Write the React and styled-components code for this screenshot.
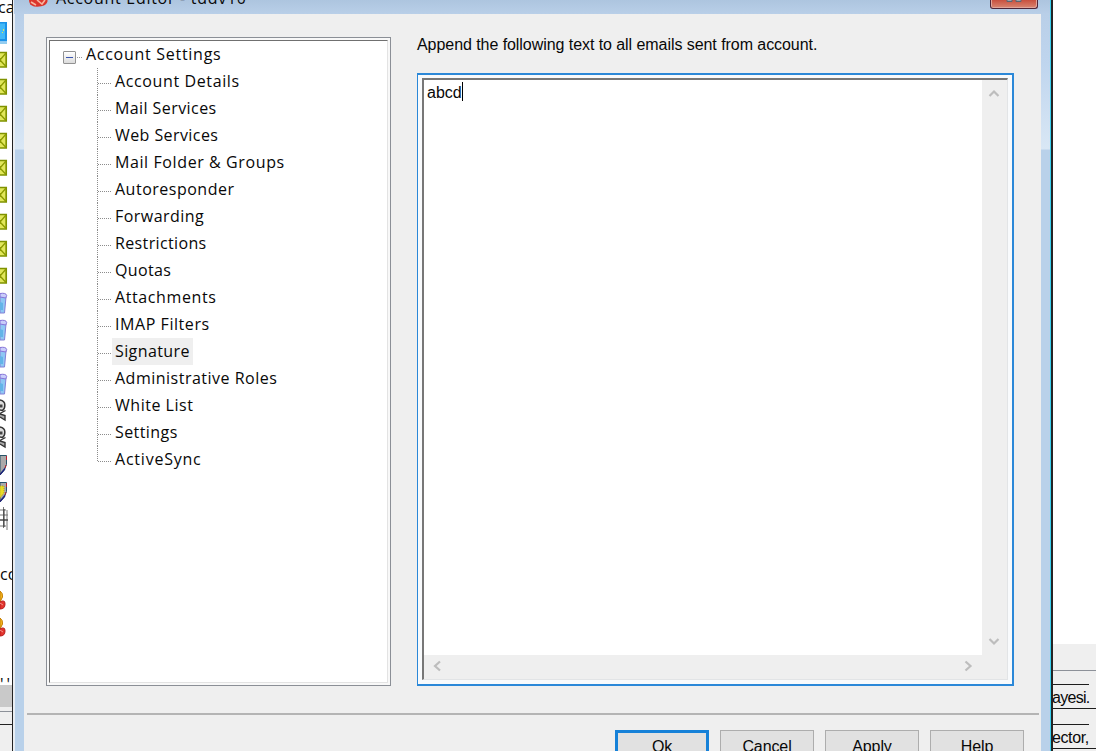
import React from 'react';
import styled, { createGlobalStyle, css } from 'styled-components';

const Global = createGlobalStyle`
  * { box-sizing: border-box; }
  html, body { margin: 0; height: 751px; overflow: hidden; background: #fff; }
`;

const Desktop = styled.div`
  display: flex;
  width: 1096px;
  height: 751px;
  overflow: hidden;
  color: #080808;
  font-family: 'Open Sans', 'Noto Sans', sans-serif;
  font-size: 16px;
`;

const LeftStrip = styled.div`
  display: flex;
  flex-direction: column;
  width: 12px;
  flex: none;
  overflow: hidden;
  background: #fff;
  white-space: nowrap;
`;

const StripLabel = styled.div`
  height: ${p => p.$h}px;
  line-height: ${p => p.$lh}px;
  flex: none;
  margin-left: ${p => p.$ml || 0}px;
  letter-spacing: ${p => p.$ls || 0}px;
`;

const IconCell = styled.div`
  height: 27px;
  flex: none;
  svg { display: block; }
`;

const StripBar = styled.div`
  height: ${p => p.$h}px;
  flex: none;
  background: ${p => p.$bg};
  border-bottom: ${p => p.$line || '0'};
`;

const Frame = styled.div`
  display: flex;
  flex-direction: column;
  width: 1041px;
  flex: none;
  border-left: 1px solid #222;
  border-right: 2px solid #252525;
  background: #e9eef3;
`;

const TitleBar = styled.div`
  display: flex;
  height: 14px;
  flex: none;
  margin-left: 1px;
  padding-left: 15px;
  border-right: 1px solid #38cfee;
  background: linear-gradient(#adc5df, #b9cfe8);
`;

const TitleText = styled.div`
  margin: -14px 0 0 7px;
  height: 24px;
  line-height: 24px;
  font-size: 16px;
  white-space: pre;
  letter-spacing: ${p => p.$ls}px;
`;

const CloseButton = styled.div`
  display: flex;
  justify-content: center;
  width: 48px;
  height: 9px;
  margin: 0 12px 0 auto;
  border: 1px solid #4f2638;
  border-top: 0;
  border-radius: 0 0 3px 3px;
  background: linear-gradient(#c8503e, #d98772);
  box-shadow: inset 1px 0 #e0a59a, inset -1px -1px #e0a59a;
`;

const Middle = styled.div`
  display: flex;
  flex: 1;
  min-height: 0;
  border-right: 1px solid #38cfee;
`;

const Side = styled.div`
  width: ${p => p.$w}px;
  flex: none;
  margin-left: ${p => p.$ml || 0}px;
  background: linear-gradient(#b9cfe8 0, #bfd5ee 50px, #d9e7f5 135px, #b9d1ea 136px);
`;

const Client = styled.div`
  flex: 1;
  display: flex;
  flex-direction: column;
  background: #efefef;
`;

const Panels = styled.div`
  display: flex;
  height: 699px;
  flex: none;
  padding: 23px 27px 0 22px;
`;

const TreeBox = styled.div`
  width: 345px;
  height: 649px;
  flex: none;
  border: 1px solid #8b8f96;
  padding: 2px;
  background: #f8f8f8;
`;

const TreeInner = styled.div`
  height: 643px;
  border-top: 1px solid #707070;
  border-left: 1px solid #707070;
  border-right: 1px solid #e3e3e3;
  border-bottom: 1px solid #e3e3e3;
  background: #fff;
`;

const TreeRoot = styled.div`
  display: flex;
  align-items: center;
  height: 27px;
  padding-left: 13px;
`;

const Expander = styled.div`
  display: grid;
  place-items: center;
  width: 13px;
  height: 13px;
  margin-top: 6px;
  border: 1px solid #929292;
  border-radius: 1px;
  background: linear-gradient(#fff, #dcdcdc);
  &::before { content: ''; width: 7px; height: 1px; background: #3c56b0; }
`;

const RootDots = styled.div`
  width: 5px;
  margin: 5px 4px 0 1px;
  border-top: 1px dotted #999;
`;

const Label = styled.span`
  letter-spacing: ${p => p.$ls || 0}px;
  white-space: nowrap;
`;

const RootLabel = styled(Label)`
  line-height: 22px;
  padding-bottom: 2px;
`;

const Branch = styled.div`
  display: flex;
  height: 27px;
  padding-left: 47px;
`;

const Joint = styled.div`
  width: 14px;
  height: ${p => (p.$last ? 15 : 27)}px;
  margin-right: 1px;
  border-left: 1px dotted #8c8c8c;
  &::before { content: ''; display: block; height: 15px; border-bottom: 1px dotted #8c8c8c; }
`;

const BranchText = styled.div`
  height: 27px;
  line-height: 27px;
  padding: 0 3px;
  ${p => p.$active && css`background: #efefef;`}
`;

const Editor = styled.div`
  display: flex;
  flex-direction: column;
  width: 597px;
  margin-left: 26px;
`;

const Hint = styled.div`
  height: 36px;
  line-height: 16px;
  font-family: 'Liberation Sans', Arial, sans-serif;
  font-size: 16px;
  letter-spacing: ${p => p.$ls}px;
  white-space: nowrap;
`;

const FocusBox = styled.div`
  height: 613px;
  padding: 3px 4px 4px 4px;
  border: 2px solid #2b88d8;
  border-left-width: 1px;
  background: #f8fafc;
`;

const TextArea = styled.div`
  display: grid;
  grid-template-columns: 1fr 25px;
  grid-template-rows: 1fr 24px;
  height: 602px;
  border: 1px solid #e2e4e6;
  border-top: 2px solid #777;
  border-left: 2px solid #777;
  background: #efefef;
`;

const Typed = styled.div`
  display: flex;
  align-items: flex-start;
  padding: 2px 0 0 3px;
  background: #fff;
  font-family: 'Liberation Sans', Arial, sans-serif;
  font-size: 16px;
  line-height: 21px;
`;

const Caret = styled.div`
  width: 1px;
  height: 19px;
  background: #000;
`;

const Scroll = styled.div`
  display: flex;
  flex-direction: ${p => (p.$vertical ? 'column' : 'row')};
  justify-content: space-between;
  align-items: center;
  padding: ${p => (p.$vertical ? '8px 2px 8px 0' : '0 8px 2px 7px')};
  svg { display: block; }
`;

const Footer = styled.div`
  display: flex;
  flex: 1;
  justify-content: flex-end;
  gap: 11px;
  margin: 0 2px 0 3px;
  padding: 15px 15px 0 0;
  border-top: 2px solid #b4b4b4;
`;

const Button = styled.div`
  width: 94px;
  height: 32px;
  flex: none;
  border: ${p => (p.$primary ? '3px solid #1681d8' : '1px solid #adadad')};
  padding-top: ${p => (p.$primary ? 2 : 4)}px;
  background: #e1e1e1;
  text-align: center;
  font-family: 'Liberation Sans', Arial, sans-serif;
  font-size: 16px;
  line-height: 24px;
  letter-spacing: -0.1px;
`;

const RightStrip = styled.div`
  flex: 1;
  display: flex;
  flex-direction: column;
  overflow: hidden;
  background: #efefef;
  font-family: 'Liberation Sans', Arial, sans-serif;
`;

const Blank = styled.div`
  height: 644px;
  flex: none;
  background: #fff;
`;

const Gap = styled.div`
  height: ${p => p.$h}px;
  flex: none;
  border-bottom: ${p => (p.$line ? '1px solid #8d9199' : '0')};
`;

const CutTab = styled.div`
  height: 25px;
  flex: none;
  line-height: 27px;
  font-size: 16px;
  border-bottom: 1px solid #1c1c1c;
  background: linear-gradient(#1c1c1c, #1c1c1c) 0 0 / 36px 1px no-repeat;
  letter-spacing: ${p => p.$ls}px;
  text-indent: -1px;
  white-space: nowrap;
`;

const Monitor = () => (
  <svg width="8" height="27" viewBox="0 0 8 27">
    <path d="M0 4h7v19.500H0z" fill="#1a92e8" />
    <path d="M0 5.500h5V21H0z" fill="#42b9f8" />
    <path d="M3 11h1v2H3zM2 14h1v1H2z" fill="#e5e94c" />
    <path d="M0 25h7" stroke="#2b9be0" />
  </svg>
);
const Mail = () => (
  <svg width="8" height="27" viewBox="0 0 8 27">
    <path d="M-8 7.500H6.200v14.500H-8z" fill="#e1e75a" stroke="#7f9200" strokeWidth="1.700" />
    <path d="M6 8L0 15l6 6.500M0 17v-4" fill="none" stroke="#8c9a00" strokeWidth="1.300" />
  </svg>
);
const Bin = () => (
  <svg width="8" height="27" viewBox="0 0 8 27">
    <path d="M0 8l6 1-1.500 16H0z" fill="#8ec8f4" stroke="#8481d6" />
    <path d="M0 5.500q6-1 6.700 2L5.700 10 0 9z" fill="#c9cdfa" stroke="#8674d8" />
    <path d="M0 14l3 1v7H0z" fill="#63b4e8" />
  </svg>
);
const Skull = () => (
  <svg width="8" height="27" viewBox="0 0 8 27">
    <path d="M0 4q5 1 4.800 5Q5 13 2.500 14.500L0 14" fill="#ddd" stroke="#333" strokeWidth="1.500" />
    <path d="M0 8.500h2.500v3H0z" fill="#444" />
    <path d="M0 17.500l5.500-3M0 18l5 1.500V24l-5-3" fill="#aaa" stroke="#333" strokeWidth="1.400" />
  </svg>
);
const Shield = ({ gold }) => (
  <svg width="8" height="27" viewBox="0 0 8 27">
    <path d="M0 5.500h6.500v9Q5 21 0 25z" fill="#aaa" stroke="#285268" />
    <path d="M6.500 6v4M6 15l-1 3M3 21l-3 3" stroke="#b5212d" />
    <path d="M5 18.500l-5 6" stroke="#1a237e" strokeWidth="1.400" />
    {gold && <path d="M0 9h4v7l-4 5z" fill="#e8dd24" stroke="#b39e20" strokeDasharray="1 1" />}
  </svg>
);
const Grid = () => (
  <svg width="9" height="27" viewBox="0 0 9 27">
    <path d="M0 6h6M0 11h8M0 16h8M0 22h6M3.500 3v21M7 6v20" stroke="#777" fill="none" />
    <path d="M4 5v18M0 16h8" stroke="#333" />
  </svg>
);
const Person = () => (
  <svg width="8" height="27" viewBox="0 0 8 27">
    <path d="M0 4q3 2 2.500 6L0 15z" fill="#f5b921" stroke="#c47b00" />
    <path d="M0 15q5-3 5 2 0 5-5 5z" fill="#e3342c" stroke="#b81c1c" />
    <path d="M0 16l3 2" stroke="#f3928a" />
  </svg>
);
const AppMark = () => (
  <svg width="20" height="8" viewBox="0 0 20 8">
    <path d="M0 0h18.500q.5 3-3.500 5.500-3 1.500-10 1Q0 5 0 0z" fill="#db352b" />
    <path d="M2 2l5 3M8 0l5 4 3-4" stroke="#f8b39d" strokeWidth="1.600" fill="none" />
  </svg>
);

const ARROWS = {
  up: 'M1.500 8L6 3.500 10.500 8',
  down: 'M1.500 4L6 8.500 10.500 4',
  left: 'M9 1.500L4 6l5 4.500',
  right: 'M3.500 1.500L8.500 6l-5 4.500',
};
const Arrow = ({ dir }) => (
  <svg width="12" height="12" viewBox="0 0 12 12">
    <path d={ARROWS[dir]} fill="none" stroke="#bdbdbd" strokeWidth="2.200" />
  </svg>
);

const STRIP_ICONS = [
  Monitor, ...Array(9).fill(Mail), ...Array(4).fill(Bin), Skull, Skull,
  Shield, () => <Shield gold />, Grid,
];

const BRANCHES = [
  ['Account Details', 0.62], ['Mail Services', 0.42], ['Web Services', 0.42],
  ['Mail Folder & Groups', 0.6], ['Autoresponder', 0.5], ['Forwarding', 0.46],
  ['Restrictions', 0.36], ['Quotas', 0.35], ['Attachments', 0.6], ['IMAP Filters', 0.56],
  ['Signature', 0.4], ['Administrative Roles', 0.5], ['White List', 0.52],
  ['Settings', 0.42], ['ActiveSync', 0.78],
];

export default function App() {
  return (
    <Desktop>
      <Global />
      <LeftStrip>
        <StripLabel $h={18} $lh={14} $ml={-2}>ca</StripLabel>
        {STRIP_ICONS.map((Icon, i) => <IconCell key={i}><Icon /></IconCell>)}
        <StripLabel $h={56} $lh={86}>cc</StripLabel>
        <IconCell><Person /></IconCell>
        <IconCell><Person /></IconCell>
        <StripLabel $h={44} $lh={87} $ls={3}>''</StripLabel>
        <StripBar $h={22} $bg="#c9c9c9" />
        <StripBar $h={5} $bg="#efefef" $line="1px solid #8d9199" />
        <StripBar $h={13} $bg="#efefef" $line="1px solid #222" />
        <StripBar $h={30} $bg="#efefef" />
      </LeftStrip>
      <Frame>
        <TitleBar>
          <AppMark />
          <TitleText $ls={0.72}>Account Editor - tddv10</TitleText>
          <CloseButton>
            <svg width="16" height="4" viewBox="0 0 16 4">
              <path d="M1 0h5v1.500H1zM10 0h5v1.500h-5z" fill="#ddd" stroke="#5a6472" />
            </svg>
          </CloseButton>
        </TitleBar>
        <Middle>
          <Side $w={9} $ml={2} />
          <Client>
            <Panels>
              <TreeBox>
                <TreeInner>
                  <TreeRoot>
                    <Expander />
                    <RootDots />
                    <RootLabel $ls={0.72}>Account Settings</RootLabel>
                  </TreeRoot>
                  {BRANCHES.map(([name, ls], i) => (
                    <Branch key={name}>
                      <Joint $last={i === BRANCHES.length - 1} />
                      <BranchText $active={name === 'Signature'}>
                        <Label $ls={ls}>{name}</Label>
                      </BranchText>
                    </Branch>
                  ))}
                </TreeInner>
              </TreeBox>
              <Editor>
                <Hint $ls={-0.06}>Append the following text to all emails sent from account.</Hint>
                <FocusBox>
                  <TextArea>
                    <Typed>abcd<Caret /></Typed>
                    <Scroll $vertical><Arrow dir="up" /><Arrow dir="down" /></Scroll>
                    <Scroll><Arrow dir="left" /><Arrow dir="right" /></Scroll>
                  </TextArea>
                </FocusBox>
              </Editor>
            </Panels>
            <Footer>
              <Button $primary>Ok</Button>
              <Button>Cancel</Button>
              <Button>Apply</Button>
              <Button>Help</Button>
            </Footer>
          </Client>
          <Side $w={9} />
        </Middle>
      </Frame>
      <RightStrip>
        <Blank />
        <Gap $h={27} $line />
        <Gap $h={13} />
        <CutTab $ls={-0.7}>ayesi.</CutTab>
        <Gap $h={15} />
        <CutTab $ls={-0.4}>ector,</CutTab>
      </RightStrip>
    </Desktop>
  );
}
